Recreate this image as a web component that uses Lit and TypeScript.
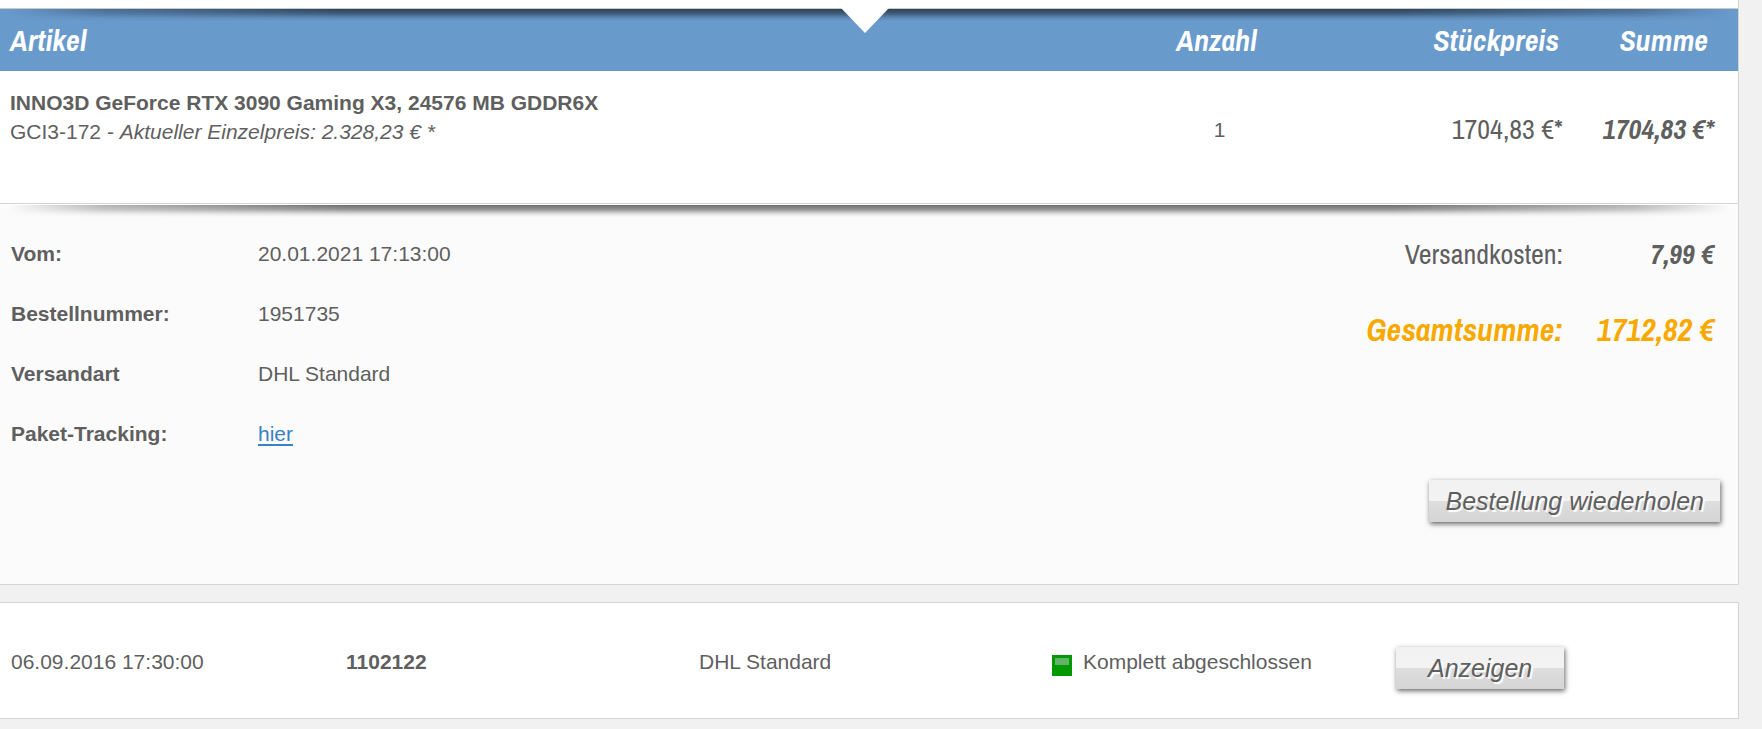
import { LitElement, html, css } from "lit";
import { customElement, property } from "lit/decorators.js";

@customElement("shop-button")
class ShopButton extends LitElement {
  @property({ type: Boolean, reflect: true }) wide = false;
  static styles = css`
    :host { display: inline-block; }
    .button {
      display: block;
      height: 42px;
      padding: 0 16px;
      border: 0;
      font: italic 25px/42px "Liberation Sans", Arial, sans-serif;
      white-space: nowrap;
      color: #5f5f5f;
      text-shadow: 2px 2px 1px #fff;
      background: linear-gradient(#f1f1f1 0%, #f3f3f3 49%, #dedede 50%, #d4d4d4 100%);
      box-shadow: 1px 2px 5px rgba(0, 0, 0, 0.6);
      cursor: pointer;
    }
    :host([wide]) .button { padding: 0 32px; }
  `;
  render() {
    return html`<button class="button" type="button"><slot></slot></button>`;
  }
}

@customElement("app-root")
class AppRoot extends LitElement {
  items = [
    {
      name: "INNO3D GeForce RTX 3090 Gaming X3, 24576 MB GDDR6X",
      code: "GCI3-172",
      current: "Aktueller Einzelpreis: 2.328,23 € *",
      count: 1,
      price: "1704,83 €*",
      sum: "1704,83 €*",
    },
  ];

  static styles = css`
    :host {
      display: block;
      min-height: 100vh;
      box-sizing: border-box;
      padding-right: 23px;
      background: #f1f1f1;
      color: #5f5f5f;
      font: 21px/29px "Liberation Sans", Arial, sans-serif;
    }
    .order {
      padding-top: 8px;
      background: #fff;
      border: solid #d4d4d4;
      border-width: 0 1px 1px 0;
    }
    .items {
      width: 100%;
      border-collapse: collapse;
      table-layout: fixed;
      border-bottom: 1px solid #d4d4d4;
    }
    .items-wrap { position: relative; border-top: 1px solid #c9c9c9; }
    .items-wrap::before, .details::before {
      content: "";
      position: absolute;
      inset: 0 0 auto;
      height: 12px;
      background: linear-gradient(rgba(0, 0, 0, 0.56), rgba(0, 0, 0, 0.42) 35%, rgba(0, 0, 0, 0.1) 75%, transparent);
      mask-image: linear-gradient(90deg, transparent 0.5%, rgba(0, 0, 0, 0.5) 6%, #000 20%, #000 80%, rgba(0, 0, 0, 0.5) 94%, transparent 99.5%);
    }
    .notch {
      position: absolute;
      top: -1px;
      left: 50%;
      margin-left: -28px;
      width: 48px;
      height: 25px;
      background: #fff;
      clip-path: polygon(0 0, 100% 0, 50% 100%);
    }
    .col-count { width: 17%; }
    .col-price { width: 12%; }
    .col-sum { width: 9.5%; }
    .narrow {
      font-family: "Archivo Narrow", "Liberation Sans Narrow", "Liberation Sans", sans-serif;
      font-size: 28px;
      text-align: right;
      white-space: nowrap;
    }
    th {
      height: 62px;
      padding: 0 10px;
      background: #699acc;
      color: #fff;
      font: italic bold 30px/62px "Archivo Narrow", "Liberation Sans Narrow", "Liberation Sans", sans-serif;
      text-align: left;
    }
    td { height: 132px; padding: 0 10px; box-sizing: border-box; }
    td.article { padding-top: 17px; vertical-align: top; }
    td.article p { margin: 0; }
    .count { text-align: center; }
    td.count { padding: 0 10px 14px 16px; }
    td.narrow { padding-bottom: 14px; }
    th.price, th.sum { text-align: right; }
    th.price { padding-right: 14px; }
    th.sum { padding-right: 30px; }
    td.sum { padding-right: 24px; }
    .strong { font-weight: bold; font-style: italic; }
    .details {
      position: relative;
      display: flex;
      justify-content: space-between;
      border-top: 1px solid #fff;
      padding: 19px 24px 62px 11px;
      background: #fbfbfb;
    }
    .facts {
      display: grid;
      grid-template-columns: 247px auto;
      grid-auto-rows: 60px;
      line-height: 60px;
      margin: 0;
    }
    dt { font-weight: bold; }
    dd { margin: 0; }
    a { color: #3a80c4; text-decoration-thickness: 2px; text-underline-offset: 3px; }
    .right { display: flex; flex-direction: column; align-items: flex-end; }
    .totals {
      display: grid;
      grid-template-columns: auto 151px;
      grid-template-rows: 60px 92px;
      line-height: 60px;
      margin: 0;
    }
    .totals dt { font-weight: normal; }
    .totals .grand { font-size: 32px; font-weight: bold; font-style: italic; line-height: 92px; color: #f7a900; }
    .repeat { margin: 104px -6px 0 0; }
    .next {
      display: grid;
      grid-template-columns: 335fr 353fr 353fr 344fr 342fr;
      align-items: center;
      margin-top: 17px;
      height: 113px;
      padding: 2px 0 0 11px;
      background: #fff;
      border: solid #d4d4d4;
      border-width: 1px 1px 1px 0;
    }
    .state { display: flex; gap: 11px; align-items: center; }
    .lamp { flex: none; margin-top: 8px; }
    .show { margin-top: 14px; }
  `;

  render() {
    return html`
      <section class="order">
        <div class="items-wrap">
          <table class="items">
            <colgroup><col /><col class="col-count" /><col class="col-price" /><col class="col-sum" /></colgroup>
            <thead>
              <tr>
                <th>Artikel</th>
                <th class="count">Anzahl</th>
                <th class="price">Stückpreis</th>
                <th class="sum">Summe</th>
              </tr>
            </thead>
            <tbody>
              ${this.items.map(
                (i) => html`<tr>
                  <td class="article"><p><b>${i.name}</b></p><p>${i.code} - <i>${i.current}</i></p></td>
                  <td class="count">${i.count}</td>
                  <td class="narrow">${i.price}</td>
                  <td class="narrow sum strong">${i.sum}</td>
                </tr>`
              )}
            </tbody>
          </table>
          <span class="notch"></span>
        </div>
        <div class="details">
          <dl class="facts">
            <dt>Vom:</dt><dd>20.01.2021 17:13:00</dd>
            <dt>Bestellnummer:</dt><dd>1951735</dd>
            <dt>Versandart</dt><dd>DHL Standard</dd>
            <dt>Paket-Tracking:</dt><dd><a href="#tracking">hier</a></dd>
          </dl>
          <div class="right">
            <dl class="totals">
              <dt class="narrow">Versandkosten:</dt><dd class="narrow strong">7,99 €</dd>
              <dt class="narrow grand">Gesamtsumme:</dt><dd class="narrow grand">1712,82 €</dd>
            </dl>
            <shop-button class="repeat">Bestellung wiederholen</shop-button>
          </div>
        </div>
      </section>
      <section class="next">
        <span>06.09.2016 17:30:00</span>
        <b>1102122</b>
        <span>DHL Standard</span>
        <span class="state">
          <svg class="lamp" width="20" height="21" viewBox="0 0 20 21" aria-hidden="true">
            <rect width="20" height="21" fill="#090" /><rect x="3" y="3" width="14" height="7" fill="#62b368" />
          </svg>
          Komplett abgeschlossen
        </span>
        <shop-button class="show" wide>Anzeigen</shop-button>
      </section>
    `;
  }
}
